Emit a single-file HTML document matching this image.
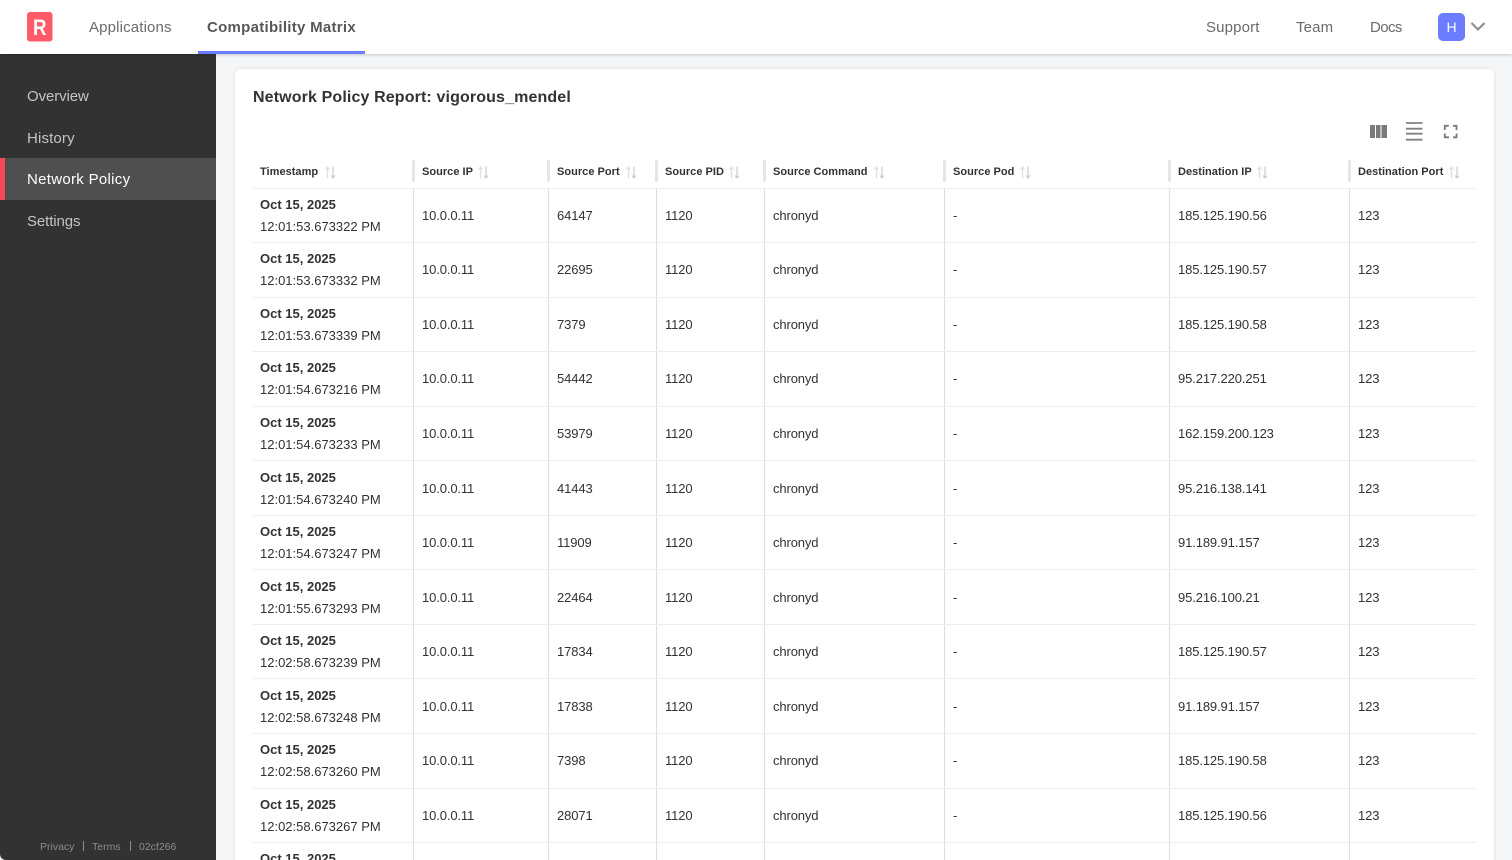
<!DOCTYPE html>
<html lang="en"><head><meta charset="utf-8"><title>Network Policy Report</title>
<style>
*{box-sizing:border-box}
html,body{margin:0;padding:0;width:1512px;height:860px;overflow:hidden;background:#f5f6f8;font-family:"Liberation Sans",sans-serif;color:#323232}
#wrap{position:relative;width:1512px;height:860px;overflow:hidden;background:#f5f6f8}
.abs{position:absolute}
#top{position:absolute;left:0;top:0;width:1512px;height:54px;background:#fff;box-shadow:0 1px 3px rgba(0,0,0,.2);z-index:3}
#top span{position:absolute;top:18px;font-size:15px;line-height:19px;color:#6b6b6b;letter-spacing:.15px;white-space:nowrap}
#side{position:absolute;left:0;top:54px;width:216px;height:806px;background:#323232;border-bottom-left-radius:6px}
#side .i{position:absolute;left:0;width:216px;height:42px;line-height:42px;padding:1px 0 0 27px;font-size:15px;letter-spacing:.15px;color:#c4c4c4}
#side .a{background:#4f4f4f;color:#fff;border-left:5px solid #f7475a;padding-left:22px}
#foot span{position:absolute;font-size:10.5px;line-height:13px;color:#8d8d8d;white-space:nowrap}
#foot i{position:absolute;width:1px;height:10px;background:#8d8d8d}
#card{position:absolute;left:235px;top:69px;width:1259px;height:830px;background:#fff;border-radius:5px;box-shadow:0 0 3px rgba(0,0,0,.12)}
h1{position:absolute;left:253px;top:88px;margin:0;font-size:16px;line-height:20px;font-weight:bold;color:#323232;letter-spacing:.13px;white-space:nowrap}
#t{position:absolute;left:253px;top:157px;width:1223px}
.h,.r{display:flex}
.h{height:31.5px;border-bottom:1px solid #eee;position:relative}
.r{height:54.55px;border-bottom:1px solid #eee;font-size:13px;color:#323232}
.r div{display:flex;flex-direction:column;justify-content:center;padding-left:8px;border-right:1px solid #dedede;letter-spacing:-.12px;white-space:nowrap;padding-bottom:0}
.r div:first-child{padding:1px 0 0 7px;letter-spacing:0;line-height:22px}
.r div:last-child{border-right:0}
.r b{font-weight:bold;color:#323232}
.h div{position:relative;font-size:11px;font-weight:bold;line-height:13px;padding:9px 0 0 8px;letter-spacing:.03px;white-space:nowrap;color:#323232}
.h div:first-child{padding-left:7px}
.h div:after{content:"";position:absolute;right:-1px;top:3px;width:3px;height:22px;background:#e6e6e6;border-radius:1px}
.h div:last-child:after{display:none}
.h svg{position:absolute;top:9px}
.c1{width:161px}.c2{width:135px}.c3{width:108px}.c4{width:108px}.c5{width:180px}.c6{width:225px}.c7{width:180px}.c8{width:126px}
</style></head><body>
<div id="wrap">
<div id="top">
<svg class="abs" style="left:27px;top:12px" width="26" height="30" viewBox="0 0 26 30"><rect width="25.5" height="29.5" rx="3" fill="#ff5a68"/><text transform="translate(12.8 23) scale(.85 1)" text-anchor="middle" font-family="Liberation Sans,sans-serif" font-weight="bold" font-size="22" fill="#fff">R</text></svg>
<span style="left:89px">Applications</span>
<span style="left:207px;font-weight:bold;color:#585858;letter-spacing:.28px">Compatibility Matrix</span>
<div class="abs" style="left:198px;top:51px;width:167px;height:3px;background:#6b7cff"></div>
<span style="left:1206px">Support</span>
<span style="left:1296px">Team</span>
<span style="left:1370px;letter-spacing:-.6px">Docs</span>
<div class="abs" style="left:1438px;top:13px;width:27px;height:28px;border-radius:5px;background:#6b7cff;color:#fff;font-size:14px;line-height:28px;text-align:center">H</div>
<svg class="abs" style="left:1470px;top:20px" width="16" height="12" viewBox="0 0 16 12"><path d="M1.500 3 L8 9.500 L14.500 3" fill="none" stroke="#8f8f8f" stroke-width="2.200"/></svg>
</div>
<div id="side">
<div class="i" style="top:21px;letter-spacing:-.1px">Overview</div>
<div class="i" style="top:63px">History</div>
<div class="i a" style="top:104px;letter-spacing:.3px">Network Policy</div>
<div class="i" style="top:146px;letter-spacing:-.1px">Settings</div>
</div>
<div id="foot">
<span style="left:40px;top:841px">Privacy</span><i style="left:83px;top:841px"></i>
<span style="left:92px;top:841px">Terms</span><i style="left:130px;top:841px"></i>
<span style="left:139px;top:841px">02cf266</span>
</div>
<div id="card"></div>
<h1>Network Policy Report: vigorous_mendel</h1>
<svg class="abs" style="left:1368px;top:122px" width="92" height="20" viewBox="0 0 92 20">
<path d="M2 3h5v13H2zM8 3h4.500v13H8zM13.500 3H19v13h-5.500z" fill="#7a7a7a"/>
<path d="M38 1h16.500M38 6.700h16.500M38 11.700h16.500M38 17.700h16.500" stroke="#808080" stroke-width="1.800" fill="none"/>
<path d="M76.800 8V3.800h4M85 3.800h3.500V8M88.500 11.500v3.800H85M81 15.300h-4.200v-3.800" stroke="#7a7a7a" stroke-width="1.800" fill="none"/>
</svg>
<div id="t">
<div class="h">
<div class="c1">Timestamp<svg style="left:72px" width="12" height="13" viewBox="0 0 12 13"><path d="M2.500 12.500V1M.5 3.500l2-2.500 2 2.500" stroke="#e0e0e0" stroke-width="1.300" fill="none"/><path d="M8 .5V12M6 9.500l2 2.500 2-2.500" stroke="#d0d0d0" stroke-width="1.300" fill="none"/></svg></div>
<div class="c2">Source IP<svg style="left:64px" width="12" height="13" viewBox="0 0 12 13"><path d="M2.500 12.500V1M.5 3.500l2-2.500 2 2.500" stroke="#e0e0e0" stroke-width="1.300" fill="none"/><path d="M8 .5V12M6 9.500l2 2.500 2-2.500" stroke="#d0d0d0" stroke-width="1.300" fill="none"/></svg></div>
<div class="c3">Source Port<svg style="left:77px" width="12" height="13" viewBox="0 0 12 13"><path d="M2.500 12.500V1M.5 3.500l2-2.500 2 2.500" stroke="#e0e0e0" stroke-width="1.300" fill="none"/><path d="M8 .5V12M6 9.500l2 2.500 2-2.500" stroke="#d0d0d0" stroke-width="1.300" fill="none"/></svg></div>
<div class="c4">Source PID<svg style="left:72px" width="12" height="13" viewBox="0 0 12 13"><path d="M2.500 12.500V1M.5 3.500l2-2.500 2 2.500" stroke="#e0e0e0" stroke-width="1.300" fill="none"/><path d="M8 .5V12M6 9.500l2 2.500 2-2.500" stroke="#d0d0d0" stroke-width="1.300" fill="none"/></svg></div>
<div class="c5">Source Command<svg style="left:108.500px" width="12" height="13" viewBox="0 0 12 13"><path d="M2.500 12.500V1M.5 3.500l2-2.500 2 2.500" stroke="#e0e0e0" stroke-width="1.300" fill="none"/><path d="M8 .5V12M6 9.500l2 2.500 2-2.500" stroke="#d0d0d0" stroke-width="1.300" fill="none"/></svg></div>
<div class="c6">Source Pod<svg style="left:74.500px" width="12" height="13" viewBox="0 0 12 13"><path d="M2.500 12.500V1M.5 3.500l2-2.500 2 2.500" stroke="#e0e0e0" stroke-width="1.300" fill="none"/><path d="M8 .5V12M6 9.500l2 2.500 2-2.500" stroke="#d0d0d0" stroke-width="1.300" fill="none"/></svg></div>
<div class="c7">Destination IP<svg style="left:87px" width="12" height="13" viewBox="0 0 12 13"><path d="M2.500 12.500V1M.5 3.500l2-2.500 2 2.500" stroke="#e0e0e0" stroke-width="1.300" fill="none"/><path d="M8 .5V12M6 9.500l2 2.500 2-2.500" stroke="#d0d0d0" stroke-width="1.300" fill="none"/></svg></div>
<div class="c8">Destination Port<svg style="left:99px" width="12" height="13" viewBox="0 0 12 13"><path d="M2.500 12.500V1M.5 3.500l2-2.500 2 2.500" stroke="#e0e0e0" stroke-width="1.300" fill="none"/><path d="M8 .5V12M6 9.500l2 2.500 2-2.500" stroke="#d0d0d0" stroke-width="1.300" fill="none"/></svg></div>
</div>
<div class="r"><div class="c1"><b>Oct 15, 2025</b>12:01:53.673322 PM</div><div class="c2">10.0.0.11</div><div class="c3">64147</div><div class="c4">1120</div><div class="c5">chronyd</div><div class="c6">-</div><div class="c7">185.125.190.56</div><div class="c8">123</div></div>
<div class="r"><div class="c1"><b>Oct 15, 2025</b>12:01:53.673332 PM</div><div class="c2">10.0.0.11</div><div class="c3">22695</div><div class="c4">1120</div><div class="c5">chronyd</div><div class="c6">-</div><div class="c7">185.125.190.57</div><div class="c8">123</div></div>
<div class="r"><div class="c1"><b>Oct 15, 2025</b>12:01:53.673339 PM</div><div class="c2">10.0.0.11</div><div class="c3">7379</div><div class="c4">1120</div><div class="c5">chronyd</div><div class="c6">-</div><div class="c7">185.125.190.58</div><div class="c8">123</div></div>
<div class="r"><div class="c1"><b>Oct 15, 2025</b>12:01:54.673216 PM</div><div class="c2">10.0.0.11</div><div class="c3">54442</div><div class="c4">1120</div><div class="c5">chronyd</div><div class="c6">-</div><div class="c7">95.217.220.251</div><div class="c8">123</div></div>
<div class="r"><div class="c1"><b>Oct 15, 2025</b>12:01:54.673233 PM</div><div class="c2">10.0.0.11</div><div class="c3">53979</div><div class="c4">1120</div><div class="c5">chronyd</div><div class="c6">-</div><div class="c7">162.159.200.123</div><div class="c8">123</div></div>
<div class="r"><div class="c1"><b>Oct 15, 2025</b>12:01:54.673240 PM</div><div class="c2">10.0.0.11</div><div class="c3">41443</div><div class="c4">1120</div><div class="c5">chronyd</div><div class="c6">-</div><div class="c7">95.216.138.141</div><div class="c8">123</div></div>
<div class="r"><div class="c1"><b>Oct 15, 2025</b>12:01:54.673247 PM</div><div class="c2">10.0.0.11</div><div class="c3">11909</div><div class="c4">1120</div><div class="c5">chronyd</div><div class="c6">-</div><div class="c7">91.189.91.157</div><div class="c8">123</div></div>
<div class="r"><div class="c1"><b>Oct 15, 2025</b>12:01:55.673293 PM</div><div class="c2">10.0.0.11</div><div class="c3">22464</div><div class="c4">1120</div><div class="c5">chronyd</div><div class="c6">-</div><div class="c7">95.216.100.21</div><div class="c8">123</div></div>
<div class="r"><div class="c1"><b>Oct 15, 2025</b>12:02:58.673239 PM</div><div class="c2">10.0.0.11</div><div class="c3">17834</div><div class="c4">1120</div><div class="c5">chronyd</div><div class="c6">-</div><div class="c7">185.125.190.57</div><div class="c8">123</div></div>
<div class="r"><div class="c1"><b>Oct 15, 2025</b>12:02:58.673248 PM</div><div class="c2">10.0.0.11</div><div class="c3">17838</div><div class="c4">1120</div><div class="c5">chronyd</div><div class="c6">-</div><div class="c7">91.189.91.157</div><div class="c8">123</div></div>
<div class="r"><div class="c1"><b>Oct 15, 2025</b>12:02:58.673260 PM</div><div class="c2">10.0.0.11</div><div class="c3">7398</div><div class="c4">1120</div><div class="c5">chronyd</div><div class="c6">-</div><div class="c7">185.125.190.58</div><div class="c8">123</div></div>
<div class="r"><div class="c1"><b>Oct 15, 2025</b>12:02:58.673267 PM</div><div class="c2">10.0.0.11</div><div class="c3">28071</div><div class="c4">1120</div><div class="c5">chronyd</div><div class="c6">-</div><div class="c7">185.125.190.56</div><div class="c8">123</div></div>
<div class="r"><div class="c1"><b>Oct 15, 2025</b>12:02:58.673270 PM</div><div class="c2">10.0.0.11</div><div class="c3"></div><div class="c4"></div><div class="c5"></div><div class="c6"></div><div class="c7"></div><div class="c8"></div></div>
</div>
</div>
</body></html>
